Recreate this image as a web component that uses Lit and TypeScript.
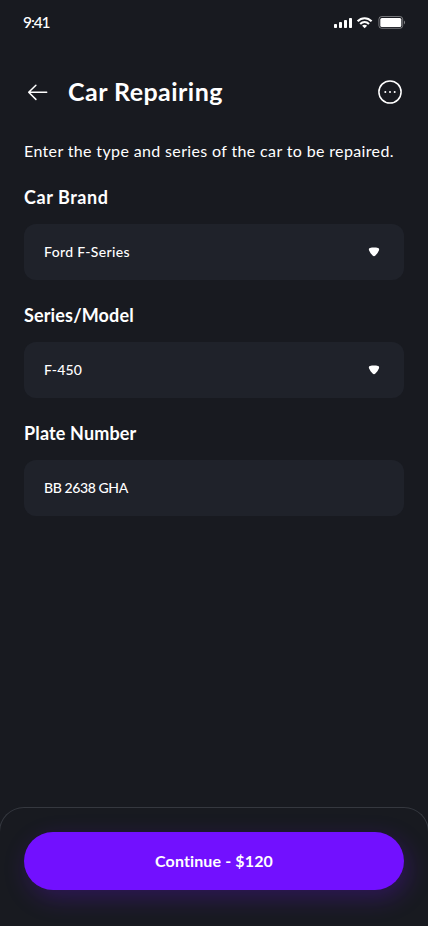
import { LitElement, html, css, svg } from "lit";
import { customElement, property } from "lit/decorators.js";

@customElement("status-bar")
class StatusBar extends LitElement {
  static styles = css`
    :host { display: flex; align-items: center; justify-content: space-between; height: 44px; padding: 0 22px 0 23px; }
    .time { font-size: 15.5px; font-weight: 500; line-height: 20px; letter-spacing: -1.1px; }
    .icons { display: block; }
  `;
  render() {
    return html`
      <span class="time">9:41</span>
      <svg class="icons" width="72" height="16" viewBox="0 0 72 16" fill="#fff">
        <rect x="0" y="10" width="3" height="4" rx="0.8" />
        <rect x="5" y="8" width="3" height="6" rx="0.8" />
        <rect x="10" y="6" width="3" height="8" rx="0.8" />
        <rect x="15" y="4" width="3" height="10" rx="0.8" />
        <g fill="none" stroke="#fff" stroke-width="2.1">
          <path d="M23.6 7.3C27.6 3.2 33.6 3.2 37.6 7.3" />
          <path d="M26.2 10C28.8 7.4 32.4 7.4 35 10" />
        </g>
        <path d="M28.1 11.7C29.5 10.5 31.7 10.5 33.1 11.7L30.6 14.2Z" />
        <rect x="44.9" y="2.5" width="23.8" height="11.8" rx="2.8" fill="none" stroke="#fff" stroke-opacity=".4" />
        <rect x="46.3" y="4.1" width="21" height="8.8" rx="1.5" />
        <path d="M70 6.5C71.4 7 71.4 9.8 70 10.4Z" opacity=".45" />
      </svg>
    `;
  }
}

@customElement("form-field")
class FormField extends LitElement {
  @property() label = "";
  @property() value = "";
  @property({ type: Boolean }) select = false;
  static styles = css`
    :host { display: block; }
    .label { font-size: 18px; line-height: 22px; font-weight: 700; height: 38px; letter-spacing: var(--label-spacing, 0.2px); }
    .box { display: flex; align-items: center; justify-content: space-between; box-sizing: border-box; height: 56px; padding: 0 24px 0 20px; border-radius: 12px; background: #1f222a; }
    .value { font-size: 14px; line-height: 20px; font-weight: 500; letter-spacing: var(--value-spacing, 0.2px); }
  `;
  render() {
    return html`
      <div class="label">${this.label}</div>
      <div class="box">
        <span class="value">${this.value}</span>
        ${this.select
          ? html`<svg width="12" height="10" viewBox="0 0 12 10" fill="#fff">
              ${svg`<path d="M2 .9C4.5 .4 7.5 .4 10 .9C11.2 1.2 11.4 2.3 10.9 3.4C10.1 5.3 8.9 7.1 7.4 8.6C6.5 9.5 5.5 9.5 4.6 8.6C3.1 7.1 1.9 5.3 1.1 3.4C.6 2.3 .8 1.2 2 .9Z" />`}
            </svg>`
          : ""}
      </div>
    `;
  }
}

@customElement("app-root")
class AppRoot extends LitElement {
  static styles = css`
    :host { display: flex; flex-direction: column; height: 926px; overflow: hidden; background: #181a20; color: #fff; font-family: Lato, "Liberation Sans", sans-serif; }
    header { display: flex; align-items: center; height: 48px; margin-top: 24px; padding: 0 24px; }
    .back { flex: none; }
    h1 { flex: 1; margin: 0 0 0 16px; padding-bottom: 2px; font-size: 25px; line-height: 32px; font-weight: 700; letter-spacing: 0.46px; }
    main { flex: 1; display: flex; flex-direction: column; padding: 23px 24px 0; }
    .intro { margin: 0 0 23px; font-size: 16px; line-height: 24px; letter-spacing: 0.36px; white-space: nowrap; }
    .fields { display: flex; flex-direction: column; gap: 24px; }
    .brand { --label-spacing: 0.55px; --value-spacing: 0.33px; }
    .model { --label-spacing: 0.15px; --value-spacing: 0.15px; }
    .plate { --label-spacing: 0.15px; --value-spacing: -0.4px; }
    footer { box-sizing: border-box; height: 119px; margin: 0 -1px; padding: 24px 24px 0; border: 1px solid #35383f; border-bottom: 0; border-radius: 25px 25px 0 0; }
    button { display: block; width: 100%; height: 58px; border: 0; border-radius: 29px; background: #7210ff; color: #fff; font: 700 16px/22px Lato, "Liberation Sans", sans-serif; letter-spacing: 0.13px; box-shadow: 4px 8px 24px rgba(114, 16, 255, 0.25); }
  `;
  render() {
    return html`
      <status-bar></status-bar>
      <header>
        <svg class="back" width="28" height="28" viewBox="0 0 28 28" fill="none" stroke="#fff" stroke-width="1.5" stroke-linecap="round" stroke-linejoin="round">
          <path d="M22.7 14.3H4.7M11.9 7.2L4.7 14.3L11.9 21.4" />
        </svg>
        <h1>Car Repairing</h1>
        <svg width="28" height="28" viewBox="0 0 28 28" fill="none">
          <circle cx="14" cy="14" r="11.1" stroke="#fff" stroke-width="1.5" />
          <g fill="#fff"><circle cx="9.3" cy="14" r="1" /><circle cx="14" cy="14" r="1" /><circle cx="18.7" cy="14" r="1" /></g>
        </svg>
      </header>
      <main>
        <p class="intro">Enter the type and series of the car to be repaired.</p>
        <div class="fields">
          <form-field class="brand" label="Car Brand" value="Ford F-Series" select></form-field>
          <form-field class="model" label="Series/Model" value="F-450" select></form-field>
          <form-field class="plate" label="Plate Number" value="BB 2638 GHA"></form-field>
        </div>
      </main>
      <footer><button>Continue - $120</button></footer>
    `;
  }
}
